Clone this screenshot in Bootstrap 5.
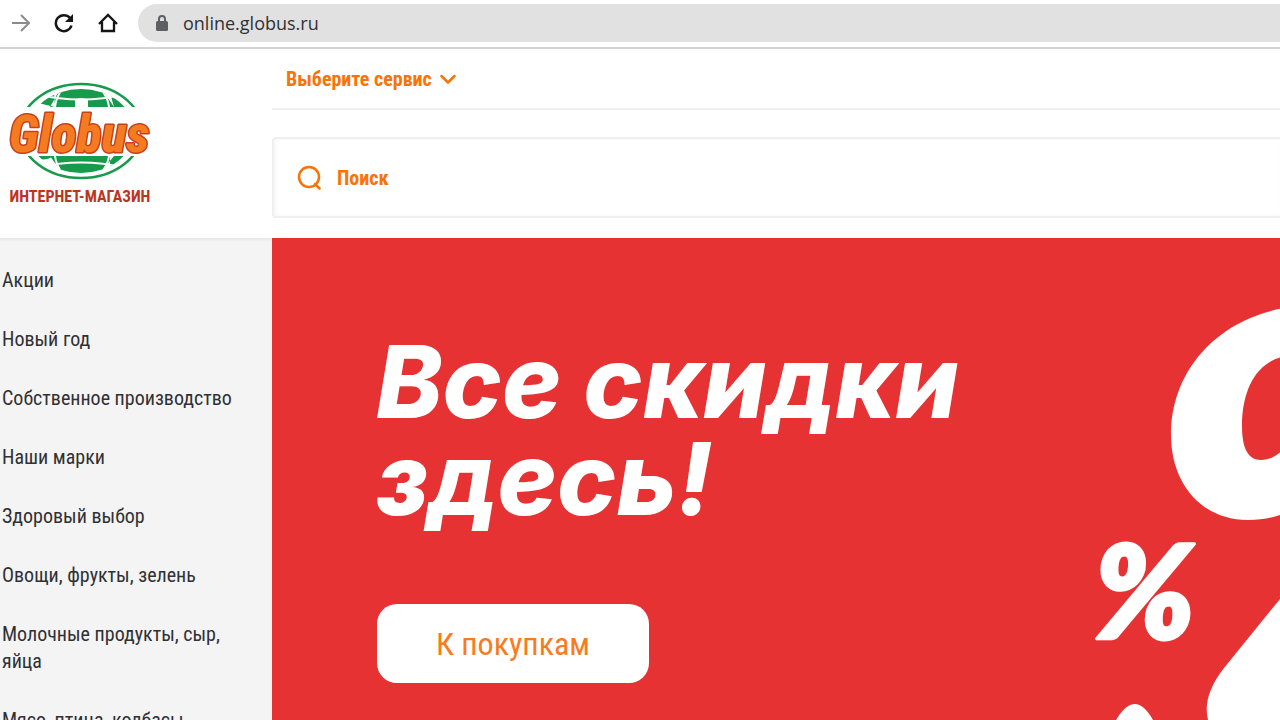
<!DOCTYPE html>
<html lang="ru">
<head>
<meta charset="utf-8">
<meta name="viewport" content="width=device-width, initial-scale=1">
<title>Глобус — интернет-магазин</title>
<link href="https://cdn.jsdelivr.net/npm/bootstrap@5.3.0/dist/css/bootstrap.min.css" rel="stylesheet">
<style>
  :root { --orange: #f97307; --red: #e63233; --side: 272px; }
  body { font-family: "Roboto Condensed", "Liberation Sans Narrow", Roboto, sans-serif; color: #303134; background: #fff; }
  .browser-bar { height: 49px; border-bottom: 2px solid #d3d3d4; padding: 4px 0 5px 10px; gap: 20px; }
  .browser-bar svg { display: block; }
  .address { height: 38px; background: #e1e1e1; border-radius: 19px 0 0 19px; padding-left: 17px; gap: 14px; }
  .address input { font: 18px/24px "Open Sans", sans-serif; color: #303134; }
  .side { width: var(--side); }
  .masthead { height: 189px; background: #fff; }
  .logo-box { width: 144px; margin: 32px 0 0 8px; }
  .logo-caption { font-size: 16px; line-height: 20px; font-weight: 700; color: #bd3420; padding-top: 6px; }
  .service { font-size: 20px; line-height: 28px; font-weight: 700; color: var(--orange); padding: 0 14px; }
  .service-row { height: 61px; border-bottom: 2px solid #efefef; }
  .search { height: 81px; margin-top: 27px; border: 2px solid #efefef; border-right: 0; border-radius: 4px 0 0 4px; padding-left: 23px; gap: 15px; box-shadow: inset 2px 0 4px #f6f6f6; }
  .search input { font-size: 20px; line-height: 28px; font-weight: 700; color: var(--orange); }
  .search input::placeholder { color: var(--orange); opacity: 1; }
  .catalog { background: #f4f4f4; padding-top: 13px; box-shadow: inset 0 4px 5px -5px #cecece; }
  .catalog a { font-size: 20px; line-height: 27px; padding: 16px 40px 16px 2px; color: #303134; }
  .promo { background: var(--red); }
  .promo h1 { font: italic 800 100px/97px Inter, sans-serif; margin: 95px 0 0 104px; }
  .promo-btn { width: 272px; height: 79px; border-radius: 20px; margin: 77px 0 0 105px; background: #fff; color: #fa7a1e; font-size: 32px; line-height: 40px; }
  .promo-btn:hover { background: #fff4ea; color: var(--orange); }
  .promo-art { right: 0; top: 0; width: 200px; height: 482px; }
</style>
</head>
<body class="vh-100 overflow-hidden d-flex flex-column">
<div class="browser-bar d-flex align-items-center flex-shrink-0">
  <div class="d-flex align-items-center gap-4">
    <svg width="20" height="20" viewBox="0 0 20 20" fill="none" stroke="#8c8c8c" stroke-width="2"><path d="M2 10h17M11 2l8 8-8 8"/></svg>
    <svg width="20" height="20" viewBox="0 0 20 20" fill="none" stroke="#161616" stroke-width="2.500"><path d="M16 5A8 8 0 1 0 17.500 12.500"/><path d="M19 1v8h-8z" fill="#161616" stroke="none"/></svg>
    <svg width="20" height="20" viewBox="0 0 20 20" fill="none" stroke="#161616" stroke-width="2.300"><path d="M1 11l9-9 9 9M4 9v9h12V9"/></svg>
  </div>
  <div class="address d-flex align-items-center flex-grow-1">
    <svg width="14" height="18" viewBox="0 0 14 18"><path d="M4 8V5a3 3 0 0 1 6 0v3" fill="none" stroke="#5d5f62" stroke-width="2"/><rect x="1" y="7" width="12" height="10" rx="1.500" fill="#5d5f62"/></svg>
    <input class="border-0 bg-transparent p-0 flex-grow-1" type="text" aria-label="Адрес" value="online.globus.ru">
  </div>
</div>

<header class="masthead d-flex flex-shrink-0">
  <div class="side flex-shrink-0">
    <a href="#" class="logo-box d-block text-decoration-none text-center">
      <svg class="d-block" width="144" height="100" viewBox="0 0 144 100" role="img" aria-label="Globus">
        <defs>
          <clipPath id="caps"><path d="M0 0H144V26H0zM0 75H144V100H0z"/></clipPath>
          <clipPath id="disc"><ellipse cx="73" cy="50" rx="53" ry="42"/></clipPath>
        </defs>
        <g clip-path="url(#caps)">
          <ellipse cx="73" cy="50" rx="61" ry="47" fill="#fff" stroke="#169a4b" stroke-width="2.500"/>
          <g clip-path="url(#disc)">
            <path d="M42 26L52 8Q73 5 94 8L106 26zM46 11Q37 15 30 22L47 26zM102 12L123 26H106zM42 75L54 92Q73 95 92 92L106 75zM24 75Q34 82 46 75zM102 75H123L102 88z" fill="#169a4b"/>
            <path d="M55 7Q48 16 47 26M92 7Q100 16 101 26M55 93Q48 84 47 75M92 93Q100 84 101 75M28 13Q73 24 118 13M28 87Q73 76 118 87" fill="none" stroke="#fff" stroke-width="2"/>
            <path d="M67 26V19q6-4 13 0V26z" fill="#fff"/>
          </g>
        </g>
        <text x="1" y="71" font-family="Roboto Condensed, Roboto, sans-serif" font-size="52" font-weight="800" font-style="italic" fill="#f47b20" stroke="#c7401d" stroke-width="3" stroke-linejoin="round" paint-order="stroke">Globus</text>
      </svg>
      <span class="logo-caption d-block text-nowrap">ИНТЕРНЕТ-МАГАЗИН</span>
    </a>
  </div>
  <div class="flex-grow-1">
    <div class="service-row d-flex align-items-center">
      <button type="button" class="service btn border-0 d-flex align-items-center gap-2">Выберите сервис
        <svg width="16" height="10" viewBox="0 0 16 10" fill="none" stroke="currentColor" stroke-width="2.500" stroke-linecap="round" stroke-linejoin="round"><path d="M1.500 2L8 8.500 14.500 2"/></svg>
      </button>
    </div>
    <label class="search d-flex align-items-center">
      <svg width="25" height="25" viewBox="0 0 25 25" fill="none" stroke="#f97307" stroke-width="2.500" stroke-linecap="round"><circle cx="12" cy="12" r="10"/><path d="M18 19l4.500 4.500"/></svg>
      <input class="border-0 bg-transparent p-0 flex-grow-1" type="search" placeholder="Поиск" aria-label="Поиск">
    </label>
  </div>
</header>

<main class="d-flex flex-grow-1 overflow-hidden">
  <nav class="catalog side flex-shrink-0 d-flex flex-column">
    <a class="text-decoration-none" href="#">Акции</a>
    <a class="text-decoration-none" href="#">Новый год</a>
    <a class="text-decoration-none text-nowrap" href="#">Собственное производство</a>
    <a class="text-decoration-none" href="#">Наши марки</a>
    <a class="text-decoration-none" href="#">Здоровый выбор</a>
    <a class="text-decoration-none" href="#">Овощи, фрукты, зелень</a>
    <a class="text-decoration-none" href="#">Молочные продукты, сыр, яйца</a>
    <a class="text-decoration-none" href="#">Мясо, птица, колбасы</a>
  </nav>
  <section class="promo flex-grow-1 position-relative overflow-hidden">
    <h1 class="text-white">Все скидки<br>здесь!</h1>
    <button type="button" class="promo-btn btn border-0">К покупкам</button>
    <svg class="promo-art position-absolute" viewBox="0 0 200 482" fill="#fff" aria-hidden="true">
      <path fill-rule="evenodd" d="M220 68C145 74 91 127 91 197C91 245 121 282 168 282C232 282 280 225 280 155C280 95 255 66 220 68zM212 118C182 118 162 145 162 188C162 210 168 222 181 222C205 222 220 190 220 158C220 135 218 118 212 118z"/>
      <path d="M200 361L144 430Q122 458 128 482H200z"/>
      <path d="M36 482Q55 450 73 482z"/>
      <text x="14" y="401" font-family="Lato, sans-serif" font-size="130" font-weight="800" font-style="italic" stroke="#fff" stroke-width="3" stroke-linejoin="round">%</text>
    </svg>
  </section>
</main>
<script src="https://cdn.jsdelivr.net/npm/bootstrap@5.3.0/dist/js/bootstrap.bundle.min.js"></script>
</body>
</html>
